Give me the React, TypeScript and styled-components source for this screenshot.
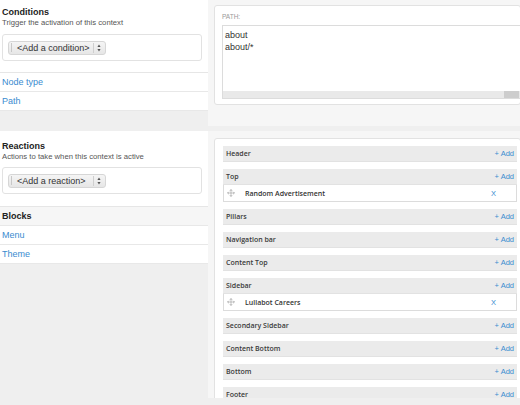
import { createGlobalStyle } from "styled-components";
import styled from "styled-components";
import { Move } from "lucide-react";

const GlobalStyle = createGlobalStyle`
  body {
    margin: 0;
    font-family: "Liberation Sans", Arial, sans-serif;
    background: #efefef;
  }
`;

const Page = styled.div`
  width: 520px;
  height: 405px;
  overflow: hidden;
  background: #efefef;
`;

const Main = styled.div`
  height: 398px;
  overflow: hidden;
  display: flex;
  flex-direction: column;
  gap: 5px;
`;

const Row = styled.div<{ $height?: number }>`
  display: grid;
  grid-template-columns: 208px 1fr;
  ${({ $height }) => ($height ? `height: ${$height}px; flex: none;` : `flex: 1;`)}
`;

const LeftCol = styled.div`
  background: #efefef;
`;

const InfoBlock = styled.div<{ $top: number; $bottom: number }>`
  background: #fff;
  padding: ${({ $top, $bottom }) => `${$top}px 6px ${$bottom}px 2px`};
  border-bottom: 1px solid #e6e6e6;
`;

const Heading = styled.h3`
  margin: 0;
  font-size: 9px;
  line-height: 12px;
  font-weight: bold;
  color: #222;
`;

const Desc = styled.div`
  font-size: 7.7px;
  line-height: 10px;
  color: #555;
`;

const SelectWrap = styled.div<{ $top: number }>`
  margin-top: ${({ $top }) => $top}px;
  height: 27px;
  box-sizing: border-box;
  border: 1px solid #e2e2e2;
  border-radius: 3px;
  display: flex;
  align-items: center;
  padding-left: 5px;
`;

const Select = styled.div`
  width: 98px;
  height: 14px;
  box-sizing: border-box;
  display: flex;
  align-items: center;
  border: 1px solid #d6d6d6;
  border-radius: 3px;
  background: linear-gradient(#f5f5f5, #e6e6e6);
  font-size: 9px;
  color: #333;
  padding-left: 2px;

  .edge {
    width: 1px;
    height: 9px;
    background: #c8c8c8;
    margin-right: 5px;
  }
  .label {
    flex: 1;
    white-space: nowrap;
  }
  .sep {
    width: 1px;
    height: 10px;
    background: #cfcfcf;
    margin: 0 3px 0 2px;
  }
  svg {
    margin-right: 4px;
  }
`;

const ListRow = styled.div<{ $head?: boolean }>`
  height: 19px;
  box-sizing: border-box;
  border-bottom: 1px solid #e8e8e8;
  display: flex;
  align-items: center;
  padding-left: 2px;
  font-size: 9px;
  background: ${({ $head }) => ($head ? "#f6f6f6" : "#fff")};
  color: ${({ $head }) => ($head ? "#222" : "#3a8bd0")};
  font-weight: ${({ $head }) => ($head ? "bold" : "normal")};
`;

const RightCol = styled.div<{ $top: number }>`
  background: #f6f6f6;
  padding: ${({ $top }) => $top}px 0 0 6px;
  overflow: hidden;
`;

const Panel = styled.div`
  background: #fff;
  border: 1px solid #e2e2e2;
  border-radius: 3px;
  margin-right: -1px;
  box-sizing: border-box;
`;

const PathPanel = styled(Panel)`
  height: 100px;
  padding: 6px 0 5px 7px;
`;

const FieldLabel = styled.div`
  font-size: 6.5px;
  line-height: 10px;
  color: #999;
  text-transform: uppercase;
  margin-bottom: 3px;
`;

const TextArea = styled.div`
  height: 74px;
  box-sizing: border-box;
  border: 1px solid #dcdcdc;
  border-right: none;
  display: flex;
  flex-direction: column;
  font-size: 9px;
  color: #333;
`;

const TextLines = styled.div`
  padding: 3px 2px;
  line-height: 12px;
`;

const ScrollTrack = styled.div`
  margin-top: auto;
  height: 7px;
  background: #e9e9e9;
  display: flex;
  justify-content: flex-end;

  span {
    width: 15px;
    margin-right: 1px;
    background: #cdcdcd;
  }
`;

const RegionPanel = styled(Panel)`
  height: 400px;
  padding: 7px 3px 0 8px;
  display: flex;
  flex-direction: column;
  gap: 7px;
`;

const Region = styled.div`
  display: flex;
  flex-direction: column;
`;

const Bar = styled.div`
  height: 16px;
  box-sizing: border-box;
  background: #ebebeb;
  border-bottom: 1px solid #e2e2e2;
  display: flex;
  align-items: center;
  justify-content: space-between;
  padding: 0 3px 0 3px;
  font-family: "Open Sans", "Liberation Sans", sans-serif;
  font-size: 7px;
  font-weight: 600;
  color: #3a3a3a;
`;

const AddLink = styled.span`
  font-family: "Liberation Sans", Arial, sans-serif;
  font-size: 7.5px;
  font-weight: normal;
  color: #3a8bd0;
`;

const Item = styled.div`
  height: 17px;
  box-sizing: border-box;
  background: #fff;
  border: 1px solid #dcdcdc;
  border-top: none;
  display: grid;
  grid-template-columns: 18px 1fr auto;
  align-items: center;
  padding: 0 20px 0 3px;
  font-family: "Open Sans", "Liberation Sans", sans-serif;
  font-size: 7px;
  font-weight: 600;
  color: #333;

  svg {
    color: #888;
  }
`;

const RemoveLink = styled.span`
  font-family: "Liberation Sans", Arial, sans-serif;
  font-size: 7.5px;
  font-weight: normal;
  color: #3a8bd0;
`;

function Arrows() {
  return (
    <svg width="4" height="8" viewBox="0 0 4 8">
      <path d="M2 0.5 L3.6 3 L0.4 3 Z M2 7.5 L3.6 5 L0.4 5 Z" fill="#555" />
    </svg>
  );
}

function SelectBox({ label }: { label: string }) {
  return (
    <Select>
      <span className="edge" />
      <span className="label">{label}</span>
      <span className="sep" />
      <Arrows />
    </Select>
  );
}

const regions: { name: string; items?: string[] }[] = [
  { name: "Header" },
  { name: "Top", items: ["Random Advertisement"] },
  { name: "Pillars" },
  { name: "Navigation bar" },
  { name: "Content Top" },
  { name: "Sidebar", items: ["Lullabot Careers"] },
  { name: "Secondary Sidebar" },
  { name: "Content Bottom" },
  { name: "Bottom" },
  { name: "Footer" },
];

export default function App() {
  return (
    <Page>
      <GlobalStyle />
      <Main>
        <Row $height={126}>
          <LeftCol>
            <InfoBlock $top={6} $bottom={11}>
              <Heading>Conditions</Heading>
              <Desc>Trigger the activation of this context</Desc>
              <SelectWrap $top={6}>
                <SelectBox label="<Add a condition>" />
              </SelectWrap>
            </InfoBlock>
            <ListRow>Node type</ListRow>
            <ListRow>Path</ListRow>
          </LeftCol>
          <RightCol $top={5}>
            <PathPanel>
              <FieldLabel>Path:</FieldLabel>
              <TextArea>
                <TextLines>
                  about
                  <br />
                  about/*
                </TextLines>
                <ScrollTrack>
                  <span />
                </ScrollTrack>
              </TextArea>
            </PathPanel>
          </RightCol>
        </Row>
        <Row>
          <LeftCol>
            <InfoBlock $top={9} $bottom={12}>
              <Heading>Reactions</Heading>
              <Desc>Actions to take when this context is active</Desc>
              <SelectWrap $top={5}>
                <SelectBox label="<Add a reaction>" />
              </SelectWrap>
            </InfoBlock>
            <ListRow $head>Blocks</ListRow>
            <ListRow>Menu</ListRow>
            <ListRow>Theme</ListRow>
          </LeftCol>
          <RightCol $top={7}>
            <RegionPanel>
              {regions.map((r) => (
                <Region key={r.name}>
                  <Bar>
                    <span>{r.name}</span>
                    <AddLink>+ Add</AddLink>
                  </Bar>
                  {r.items?.map((it) => (
                    <Item key={it}>
                      <Move size={8} strokeWidth={1.5} />
                      <span>{it}</span>
                      <RemoveLink>X</RemoveLink>
                    </Item>
                  ))}
                </Region>
              ))}
            </RegionPanel>
          </RightCol>
        </Row>
      </Main>
    </Page>
  );
}
